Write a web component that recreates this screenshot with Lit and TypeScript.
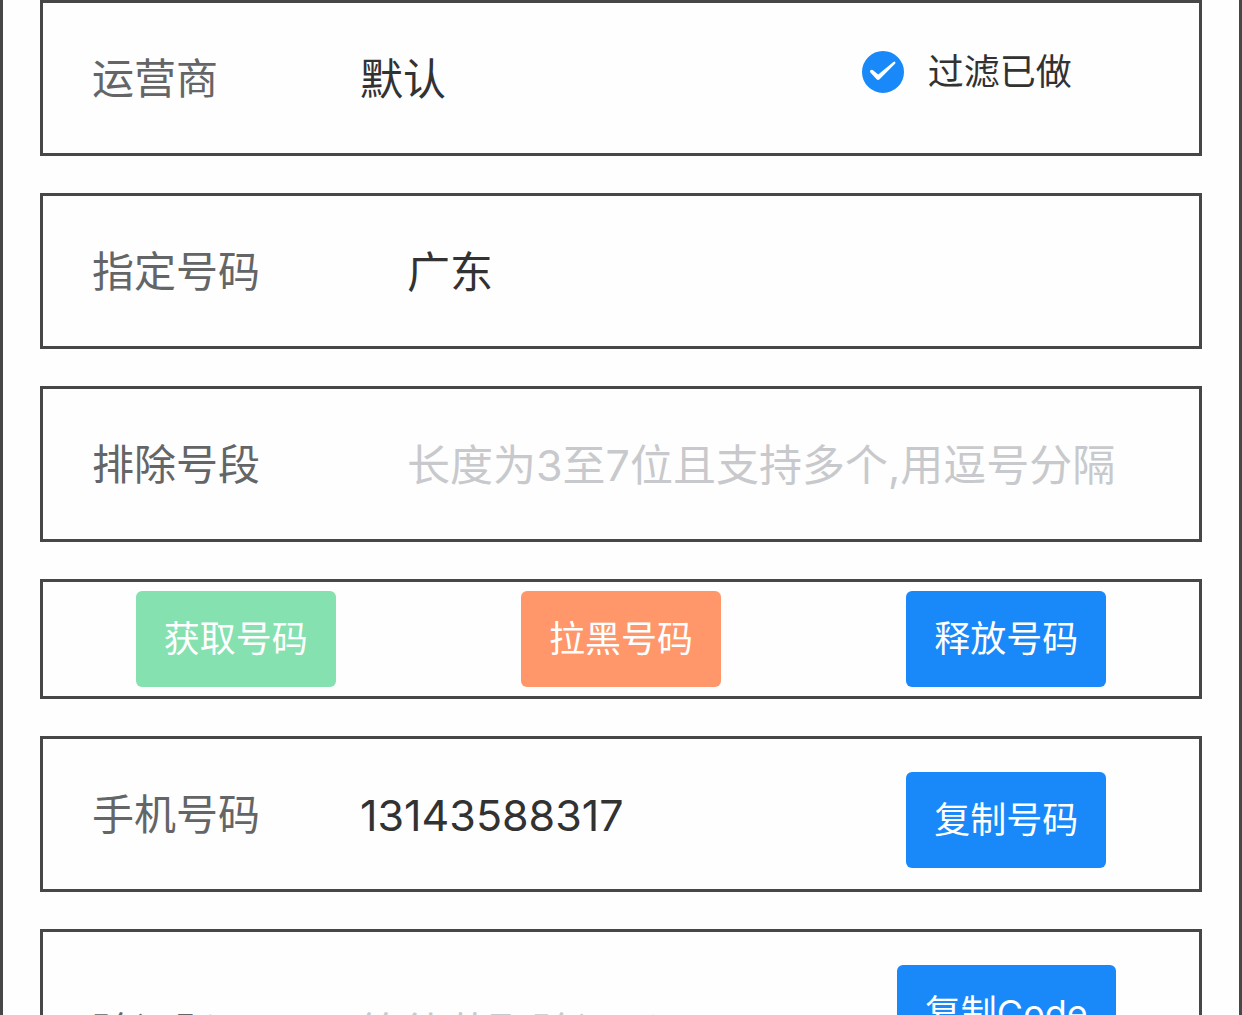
import { LitElement, html, css, nothing } from "lit";
import { customElement, property } from "lit/decorators.js";

type Tone = "primary" | "success" | "warning";

@customElement("action-button")
class ActionButton extends LitElement {
  @property() tone: Tone = "primary";

  static styles = css`
    :host {
      display: block;
    }
    .button {
      display: block;
      box-sizing: border-box;
      height: 96px;
      margin: 0;
      padding: 0 28px;
      border: 0;
      border-radius: 6px;
      color: #fff;
      font: inherit;
      font-size: 36px;
      line-height: 96px;
      white-space: nowrap;
      cursor: pointer;
    }
    .primary {
      background: #1989fa;
    }
    .success {
      background: #85e1b0;
    }
    .warning {
      background: #ff976a;
    }
  `;

  render() {
    return html`<button class="button ${this.tone}" type="button"><slot></slot></button>`;
  }
}

@customElement("form-field")
class FormField extends LitElement {
  @property() label = "";
  @property() value = "";
  @property() placeholder = "";

  static styles = css`
    :host {
      display: flex;
      align-items: center;
      min-width: 0;
      padding: 1px 0 0 49px;
    }
    .label {
      flex: none;
      width: var(--label-width, 268px);
      color: #646566;
      font-size: 42px;
      line-height: 72px;
    }
    .input {
      flex: 1;
      min-width: 0;
      height: 72px;
      margin: 0;
      padding: 0;
      border: 0;
      outline: 0;
      background: none;
      color: #323233;
      font: inherit;
      font-size: 43px;
      line-height: 72px;
    }
    .input::placeholder {
      color: #c8c9cc;
      opacity: 1;
    }
  `;

  render() {
    return html`
      <label class="label" for="field">${this.label}</label>
      <input
        class="input"
        id="field"
        type="text"
        .value=${this.value}
        placeholder=${this.placeholder || nothing}
      />
    `;
  }
}

@customElement("round-checkbox")
class RoundCheckbox extends LitElement {
  static styles = css`
    :host {
      display: block;
    }
    .row {
      display: flex;
      align-items: center;
      gap: 24px;
      color: #323233;
      font-size: 36px;
      line-height: 42px;
      white-space: nowrap;
      cursor: pointer;
    }
    .box {
      display: grid;
      width: 42px;
      height: 42px;
    }
    .input,
    .tick {
      grid-area: 1 / 1;
      width: 42px;
      height: 42px;
      margin: 0;
    }
    .input {
      appearance: none;
      box-sizing: border-box;
      border: 3px solid #c8c9cc;
      border-radius: 50%;
    }
    .input:checked {
      border-color: #1989fa;
      background: #1989fa;
    }
    .tick {
      visibility: hidden;
      pointer-events: none;
    }
    .input:checked + .tick {
      visibility: visible;
    }
  `;

  render() {
    return html`
      <label class="row">
        <span class="box">
          <input class="input" type="checkbox" checked />
          <svg class="tick" viewBox="0 0 42 42" aria-hidden="true">
            <path
              fill="#fff"
              d="M8.2 19.6 Q9.6 18.2 11 19.2 L16.2 23.6 L31.4 11 Q33 10 33.4 11.4 Q33.6 12 33 12.8 L17.6 28.2 Q16 29.6 14.6 28.2 L8.4 21.4 Q7.6 20.4 8.2 19.6 Z"
            />
          </svg>
        </span>
        <slot></slot>
      </label>
    `;
  }
}

@customElement("app-root")
class AppRoot extends LitElement {
  static styles = css`
    :host {
      display: block;
      height: 100vh;
      overflow: hidden;
      background: #fefefe;
      font-family: Inter, "Noto Sans CJK SC", sans-serif;
    }
    .frame {
      display: flex;
      flex-direction: column;
      gap: 37px;
      padding: 0 37px 37px;
      border: solid #474747;
      border-width: 0 3px;
    }
    .card {
      display: grid;
      grid-template-columns: repeat(3, minmax(0, 1fr));
      min-height: 150px;
      border: 3px solid #474747;
      background: #fefefe;
    }
    .actions {
      min-height: 114px;
      place-items: center;
    }
    .tall {
      min-height: 200px;
    }
    .main {
      grid-column: span 2;
    }
    .full {
      grid-column: span 3;
      padding-right: 24px;
      --label-width: 315px;
    }
    .option {
      padding: 48px;
    }
    .side {
      justify-self: center;
      align-self: start;
      padding-top: 33px;
    }
  `;

  render() {
    return html`
      <main class="frame">
        <section class="card">
          <form-field class="main" label="运营商" value="默认"></form-field>
          <round-checkbox class="option">过滤已做</round-checkbox>
        </section>
        <section class="card">
          <form-field class="full" label="指定号码" value="广东"></form-field>
        </section>
        <section class="card">
          <form-field
            class="full"
            label="排除号段"
            placeholder="长度为3至7位且支持多个,用逗号分隔"
          ></form-field>
        </section>
        <section class="card actions">
          <action-button tone="success">获取号码</action-button>
          <action-button tone="warning">拉黑号码</action-button>
          <action-button>释放号码</action-button>
        </section>
        <section class="card">
          <form-field class="main" label="手机号码" value="13143588317"></form-field>
          <action-button class="side">复制号码</action-button>
        </section>
        <section class="card tall">
          <form-field class="main" label="验证码" placeholder="等待获取验证码"></form-field>
          <action-button class="side">复制Code</action-button>
        </section>
      </main>
    `;
  }
}
